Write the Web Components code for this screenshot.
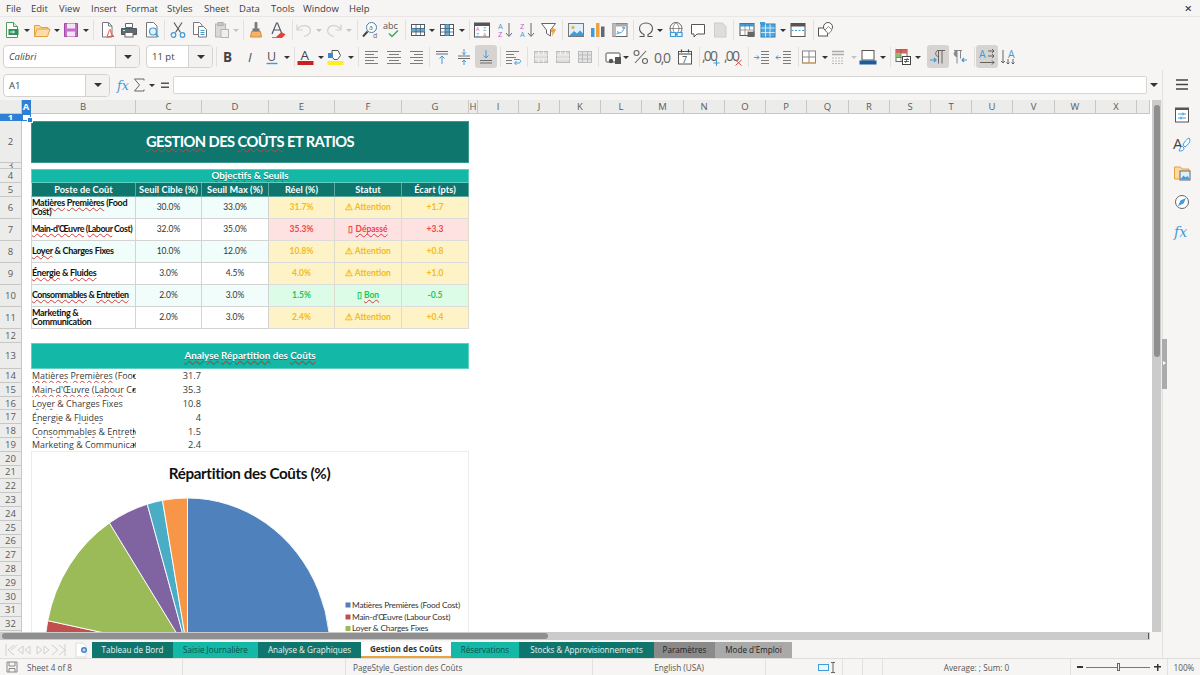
<!DOCTYPE html>
<html><head><meta charset="utf-8"><title>Gestion des Coûts</title>
<style>
html,body{margin:0;padding:0;width:1200px;height:675px;overflow:hidden;background:#f6f5f4}
body{font-family:"Open Sans","Noto Sans",sans-serif}
lo-app{width:1200px;height:675px}
</style></head><body>
<lo-app>
  <menu-bar></menu-bar>
  <tool-bar h="26" start="0" items="new@12 v@27 open@42 v@57 save@71 v@86 |@93 pdf@107 print@129 preview@152 |@164 cut@178 copy@200 paste@222 vg@236 |@243 clone@256 clear@278 |@292 undo@304 vg@319 redo@334 vg@349 |@357 find@370 spell@392 |@405 rows@418 v@432 cols@447 v@462 |@469 azgrid@482 sorta@505 sortz@527 filter@549 |@562 image@576 chart@598 pivot@620 |@633 omega@646 v@660 link@676 comment@698 note@720 |@733 hdr@747 tblx@768 v@783 freeze@798 |@813 shapes@826"></tool-bar>
  <tool-bar h="27" start="213" items="|@216 bold@228 italic@251 under@272 v@287 |@294 fcolor@306 v@321 hilite@336 v@351 |@358 aleft@372 acenter@394 aright@416 |@429 vtop@442 vmid@464 !vbot@486 |@500 wrap@513 |@527 merge@541 merge2@563 merge3@585 |@598 money@614 v@626 pct@641 num@663 date@685 |@699 adddec@712 deldec@734 |@748 indent@762 outdent@784 |@798 border@809 v@825 lstyle@838 vg@854 bcolor@868 v@883 |@890 cond@903 v@918 |@927 !ltr@938 rtl@960 |@974 !txth@987 txtv@1009">
    <combo-box w="137" italic style="margin-left:3px">Calibri</combo-box>
    <combo-box w="67" style="margin-left:6px">11 pt</combo-box>
  </tool-bar>
  <work-area>
    <div slot="main">
      <tool-bar h="30" start="110" items="fx@124 sigma@139 v@152 eq@165">
        <combo-box w="107" style="margin-left:3px">A1</combo-box>
        <formula-input slot="after"></formula-input>
      </tool-bar>
      <sheet-area></sheet-area>
      <sheet-tabs></sheet-tabs>
    </div>
    <side-bar slot="side"></side-bar>
  </work-area>
  <status-bar></status-bar>
</lo-app>
<script>
const G='#6e6e6e',B='#3f9bd9',L='#9a9a9a',O='#e8963a';
const T=(x,y,s,t,c=G,w=400,extra='')=>`<text x="${x}" y="${y}" font-size="${s}" fill="${c}" font-weight="${w}" font-family="Open Sans" ${extra}>${t}</text>`;
const alt=(x1,x2,x3,c=G)=>[3.5,6.5,9.5,12.5,15.5].map((y,i)=>`<path d="M${i%2?x3[0]:x1} ${y}H${i%2?x3[1]:x2}" stroke="${c}" stroke-width=".9"/>`).join('');
const grid=(f,bars='')=>`<rect x="2.500" y="3.500" width="13" height="11" fill="#fff" stroke="${f}"/>${bars}<path d="M2.500 7.500h13M2.500 11h13M7 3.500v11M11.500 3.500v11" stroke="${f}" stroke-width=".8"/>`;
const ICONS={
new:`<path d="M3.500 1.500h7l4 4v11h-11z" fill="#fff" stroke="#4f9d5c"/><path d="M10.500 1.500v4h4" fill="#d7ecd9" stroke="#4f9d5c"/><rect x="5.500" y="8" width="10" height="6" fill="#2f8f58"/><path d="M7 11h4M10 9.500l1.500 1.500-1.500 1.500" stroke="#fff" fill="none"/>`,
open:`<path d="M1.500 15.500v-11h5l1.500 2h7v2" fill="#fbd79c" stroke="#e6a13f"/><path d="M1.500 15.500l2.500-7.500h13l-2.500 7.500z" fill="#fcdca8" stroke="#e6a13f"/>`,
save:`<path d="M2.500 2.500h13v13h-13z" fill="#c56fcb" stroke="#9c4aa4"/><rect x="5" y="2.500" width="8" height="5" fill="#f5e4f6"/><rect x="5" y="10.500" width="8" height="5" fill="#f5e4f6"/>`,
pdf:`<path d="M4.500 1.500h6l3.500 3.500v11h-9.500z" fill="#fff" stroke="#777"/><path d="M10.500 1.500v3.500h3.500" fill="none" stroke="#777"/><path d="M9 15.500c2-4 2-7 3-7s0 5 4 7c-3-1-5 0-7 1" fill="none" stroke="#e0483e"/>`,
print:`<path d="M5.500 2.500h7v4h-7z" fill="#fff" stroke="#666"/><path d="M1.500 7.500h15v6h-15z" fill="#5f6a72" stroke="#4f585f"/><rect x="5" y="11.500" width="8" height="4.500" fill="#fff" stroke="#666"/><rect x="3" y="9" width="2" height="1" fill="#9fd"/>`,
preview:`<path d="M3.500 1.500h7l3.500 3.500v11h-10.500z" fill="#fff" stroke="#777"/><circle cx="10" cy="10.500" r="3.500" fill="#e4f2fb" stroke="${B}" stroke-width="1.200"/><path d="M12.500 13l3 3" stroke="${B}" stroke-width="1.500"/>`,
cut:`<path d="M5 1.500l6.500 10M13 1.500l-6.500 10" stroke="#555" stroke-width="1.100"/><circle cx="4.500" cy="14" r="2.300" fill="none" stroke="${B}" stroke-width="1.200"/><circle cx="13.500" cy="14" r="2.300" fill="none" stroke="${B}" stroke-width="1.200"/>`,
copy:`<path d="M2.500 1.500h6l2.500 2.500v9.500h-8.500z" fill="#fff" stroke="#777"/><path d="M7.500 5.500h5l3 3v7.500h-8z" fill="#fff" stroke="#777"/><path d="M9.500 9.500h4M9.500 11.500h4M9.500 13.500h4" stroke="${B}"/>`,
paste:`<rect x="2.500" y="3" width="10" height="13" fill="#d8d8d8" stroke="#b5b5b5"/><rect x="5" y="1.500" width="5" height="3" fill="#c6c6c6" stroke="#b0b0b0"/><rect x="8" y="8.500" width="7.500" height="8" fill="#eee" stroke="#b5b5b5"/>`,
clone:`<path d="M8 1.500h2v6H8z" fill="#888" stroke="#666" stroke-width=".7"/><path d="M5.500 7.500h7v2.500h-7z" fill="#777"/><path d="M4.500 10.500h9l1 5.500H3.500z" fill="#f5b26b" stroke="#d68a35"/>`,
clear:`<path d="M3 13L7.500 2h1L13 13M5 9h6" fill="none" stroke="#505a66" stroke-width="1.200"/><path d="M7 16l5.500-5 4 2.500-3.500 3.500H8" fill="#e5403a"/><path d="M3 16.500h5" stroke="${B}"/>`,
undo:`<path d="M2.500 8.500C5 4 13 3 15 8c1.500 4-2 6.500-6 7.500" fill="none" stroke="#d0d0d0" stroke-width="1.200"/><path d="M2 3.500v5.500h5.500" fill="none" stroke="#d0d0d0" stroke-width="1.200"/>`,
redo:`<path d="M15.500 8.500C13 4 5 3 3 8c-1.500 4 2 6.500 6 7.500" fill="none" stroke="#d0d0d0" stroke-width="1.200"/><path d="M16 3.500v5.500h-5.500" fill="none" stroke="#d0d0d0" stroke-width="1.200"/>`,
find:`<circle cx="10.500" cy="6.500" r="5" fill="#fff" stroke="#4a7da0"/><path d="M6.500 10.500l-4.500 5" stroke="#444" stroke-width="2"/>${T(8,9,7,'a',G)}${T(12,17,7,'d',G)}`,
spell:T(0,8,9,'abc','#555')+`<path d="M6 12.500l3 3 6-6" fill="none" stroke="#3fa860" stroke-width="1.500"/>`,
rows:grid('#4a5a6a',`<rect x="2.500" y="7.500" width="13" height="3.500" fill="#5db0e6"/>`),
cols:grid('#4a5a6a',`<rect x="7" y="3.500" width="4.500" height="11" fill="#5db0e6"/>`),
azgrid:`<rect x="1.500" y="2" width="15" height="14" fill="#fff" stroke="#555"/><rect x="1.500" y="2" width="15" height="3" fill="#555"/>${T(3,10,5.5,'A','#c25bc9')}${T(10,10,5.5,'Z',B)}${T(3,15.5,5.5,'Z',B)}${T(10,15.5,5.5,'A','#c25bc9')}`,
sorta:T(2,8,7.500,'A',B)+T(2,16,7.500,'Z','#c25bc9')+`<path d="M13 2v13M10 12l3 3.500 3-3.500" fill="none" stroke="#666"/>`,
sortz:T(2,8,7.500,'Z','#c25bc9')+T(2,16,7.500,'A',B)+`<path d="M13 2v13M10 12l3 3.500 3-3.500" fill="none" stroke="#666"/>`,
filter:`<path d="M1.500 2.500h14l-5 6.500v6l-4-2.500v-3.500z" fill="#fff" stroke="#666"/><path d="M12 7l4 1.500-4 7 .5-4-2-.5z" fill="#f2a03d"/>`,
image:`<rect x="1.500" y="2.500" width="15" height="13" fill="#dff0fb" stroke="#777"/><circle cx="6" cy="6.500" r="1.700" fill="#f2b04d"/><path d="M2 15l5-5 3 2.500 3-3 3.500 3.500v2z" fill="#3f9bd9"/>`,
chart:`<rect x="2" y="7" width="3.500" height="9" fill="#3f9bd9"/><rect x="7" y="2" width="3.500" height="14" fill="#f2a03d"/><rect x="12" y="5.500" width="3.500" height="10.500" fill="#5e6a72"/>`,
pivot:`<rect x="2" y="2.500" width="14" height="13" fill="#fff" stroke="#666"/><rect x="2" y="2.500" width="14" height="3" fill="#aaa"/><rect x="2" y="2.500" width="3" height="13" fill="#bbb"/><path d="M7 12c3 0 5-1 6-5M11 7l2-1 1 2M6.500 10l1 2-2 1" fill="none" stroke="${B}"/>`,
omega:`<path d="M2.500 15.500h4.500v-2C4 12 2.500 10 2.500 7.500 2.500 4 5.500 2 9 2s6.500 2 6.500 5.500c0 2.500-1.500 4.500-4.500 6v2h4.500" fill="none" stroke="#555" stroke-width="1.100"/>`,
link:`<circle cx="9" cy="7.500" r="6" fill="#fff" stroke="#666"/><path d="M3 7.500h12M9 1.500c-4 4-4 8 0 12M9 1.500c4 4 4 8 0 12" fill="none" stroke="#666" stroke-width=".7"/><path d="M3.500 11.500h5v4h-5zM10 11.500h5v4h-5z" fill="#eaf5fc" stroke="${B}" stroke-width="1.200"/>`,
comment:`<path d="M2.500 3.500h13v9.500H8l-3 3v-3H2.500z" fill="#fff" stroke="#555"/>`,
note:`<path d="M3.500 2h8l3.500 3.500V16H3.500z" fill="#ddd" stroke="#ccc"/>`,
hdr:`<rect x="2" y="2.500" width="14" height="12" fill="#fff" stroke="#555"/><rect x="2" y="2.500" width="14" height="3" fill="${B}"/><path d="M2.500 9h13M7 3v11.500M11.500 3v11.500" stroke="#777" stroke-width=".7"/><rect x="9.500" y="10.500" width="7" height="5.500" fill="#666"/><rect x="11" y="9" width="4" height="2" fill="#ccc"/>`,
tblx:`<rect x="2" y="3" width="14" height="13" fill="#4da9e0" stroke="#2b80b8"/><path d="M2 7h14M2 11.500h14M6.500 3v13M11 3v13" stroke="#fff" stroke-width=".7"/><rect x="1" y="1" width="5" height="2" fill="${B}"/>`,
freeze:`<rect x="2" y="2.500" width="14" height="13" fill="#fff" stroke="#555"/><rect x="2" y="2.500" width="14" height="3" fill="#555"/><path d="M2.500 9.500h13" stroke="${B}" stroke-dasharray="2 1.500"/>`,
shapes:`<rect x="1.500" y="7" width="9" height="8" fill="#fff" stroke="#555"/><circle cx="11" cy="6" r="4.500" fill="#fff" stroke="#555"/><path d="M8 9l3.500-3.500L15 9l-3.500 4z" fill="#fff" stroke="#888"/>`,
bold:T(4,14,13.5,'B','#444',700),
italic:T(6,14,13.5,'I','#555',400,'font-style="italic"'),
under:T(4,12.500,12.5,'U','#555')+`<path d="M3.500 15.500h11" stroke="${B}" stroke-width="1.400"/>`,
fcolor:T(3.500,11.500,13.500,'A','#444')+`<rect x="0.500" y="13" width="16" height="4" fill="#c9211e"/>`,
hilite:`<path d="M5 2.500h6l2.500 5-3 4H7l-2-3z" fill="#fff" stroke="#555"/><rect x="1" y="5" width="5" height="5" fill="#3f85c9"/><rect x="0.500" y="13" width="16" height="4" fill="#ffef20"/>`,
aleft:alt(2,15,[2,11]),
acenter:alt(2,16,[4,14]),
aright:alt(3,16,[7,16]),
vtop:`<path d="M3 3.500h12M3 6h12" stroke="${G}"/><path d="M9 16V8M6.500 10.500L9 8l2.500 2.500" fill="none" stroke="${B}"/>`,
vmid:`<path d="M3 8h12M3 10.500h12" stroke="${G}"/><path d="M9 1v5.500M7 4.500L9 6.500l2-2M9 17v-5M7 14l2-2 2 2" fill="none" stroke="${B}"/>`,
vbot:`<path d="M3 12.500h12M3 15h12" stroke="${G}"/><path d="M9 2v8M6.500 7.500L9 10l2.500-2.500" fill="none" stroke="${B}"/>`,
wrap:`<path d="M2 3.500h13M2 6.500h8M2 9.500h10M2 12.500h6M2 15.500h6" stroke="${G}" stroke-width=".9"/><path d="M10 11.500h5c2 0 2 3.500 0 3.500h-4M12.500 13l-2 2 2 2" fill="none" stroke="${B}"/>`,
merge:`<rect x="2.500" y="3.500" width="13" height="11" fill="#ddd" stroke="#bbb"/><path d="M2.500 7h13M2.500 11h13M6.500 3.500v3.500M11.500 3.500v3.500M6.500 11v3.500M11.500 11v3.500" stroke="#f2f2f2"/>`,
merge2:`<rect x="2.500" y="3.500" width="13" height="11" fill="#ddd" stroke="#bbb"/><path d="M2.500 7h13M2.500 11h13M6.500 3.500v3.500M11.500 3.500v3.500" stroke="#f2f2f2"/>`,
merge3:`<rect x="2.500" y="3.500" width="13" height="11" fill="#e4e4e4" stroke="#bbb"/><path d="M2.500 7h13M2.500 11h13M6.500 3.500v11M11.500 3.500v11" stroke="#bbb"/>`,
money:`<rect x="1" y="5" width="14" height="9" rx="1" fill="#fff" stroke="#555"/><circle cx="6" cy="13" r="2.200" fill="#555"/><rect x="10" y="9" width="6" height="7" fill="#555"/>`,
pct:`<path d="M3 15L14 3" stroke="#666" stroke-width="1.100"/><circle cx="4.500" cy="5" r="2.500" fill="none" stroke="#666" stroke-width="1.100"/><circle cx="13" cy="13" r="2.500" fill="none" stroke="#666" stroke-width="1.100"/>`,
num:T(0,14.5,14,'0,0','#666',400,'textLength="17"'),
date:`<rect x="2.500" y="3.500" width="13" height="12.500" fill="#fff" stroke="#555"/><path d="M2.500 6h13M5.500 1.500v3M12.500 1.500v3" stroke="#444" stroke-width="1.200"/>${T(6,14.500,9,'7','#444')}`,
adddec:T(-1,13,14,',00','#666',400,'textLength="16"')+`<path d="M13.500 12v6M10.500 15h6" stroke="${B}"/>`,
deldec:T(-1,13,14,',00','#666',400,'textLength="16"')+`<path d="M10.500 12l6 5.500M16.500 12l-6 5.500" stroke="#e0483e"/>`,
indent:`<path d="M8 3.500h8M8 6.500h8M8 9.500h8M8 12.500h8M8 15.500h8" stroke="${G}" stroke-width=".9"/><path d="M1 9.500h5M4 7.500l2 2-2 2" fill="none" stroke="${B}"/>`,
outdent:`<path d="M8 3.500h8M8 6.500h8M8 9.500h8M8 12.500h8M8 15.500h8" stroke="${G}" stroke-width=".9"/><path d="M1 9.500h5M3 7.500l-2 2 2 2" fill="none" stroke="${B}"/>`,
border:`<rect x="2.500" y="3" width="13" height="12" fill="#fff" stroke="#888"/><path d="M9 3v12M2.500 9h13" stroke="#888"/><path d="M2.500 15h13" stroke="#e8963a"/>`,
lstyle:`<path d="M3 3.500h12M3 6.500h12" stroke="#aaa" stroke-width="1.500"/><path d="M3 10h12M3 13h12M3 15.500h12" stroke="#bbb" stroke-dasharray="2 1"/>`,
bcolor:`<rect x="3" y="2.500" width="12" height="9.500" fill="#fff" stroke="#555"/><rect x="0.500" y="12.500" width="17" height="4" fill="#1c5c9c"/>`,
cond:`<rect x="2" y="1.500" width="11" height="12" fill="#fff" stroke="#666"/><rect x="2" y="1.500" width="11" height="4" fill="#d9625b"/><rect x="2" y="5.500" width="5" height="4" fill="#7fbf6f"/><path d="M2 9.500h11M7 1.500v12" stroke="#666" stroke-width=".7"/><rect x="8.500" y="8.500" width="8" height="8" fill="#fff" stroke="#444"/><path d="M10 11.500h5M10 13.500h5M13.500 10l-2 5" stroke="#444" stroke-width=".8"/>`,
ltr:`<path d="M8 2.500h8M9.500 2.500v13M13 2.500v13" stroke="#666" fill="none"/><path d="M9.500 2.500C6 2.500 5.500 8.500 9.500 8.500" fill="none" stroke="#666"/><path d="M1 12h6M5 10l2 2-2 2" stroke="${B}" fill="none" stroke-width="1.200"/>`,
rtl:`<path d="M3 2.500h8M6 2.500v13M9.500 2.500v8" stroke="#888" fill="none"/><path d="M6 2.500C2.500 2.500 2 8.500 6 8.500" fill="#888" stroke="#888"/><path d="M16 12h-5M13 10l-2 2 2 2" stroke="${B}" fill="none" stroke-width="1.200"/>`,
txth:T(1,10,10.500,'A',B)+`<path d="M10 3h6M14 1l2 2-2 2M10 8h6M14 6l2 2-2 2M2 14.500h14M14 12.500l2 2-2 2" fill="none" stroke="#555" stroke-width=".9"/>`,
txtv:T(8,10,10.500,'A',B)+`<path d="M3 2v13M1 13l2 2 2-2M8 11v5M6.500 14.500L8 16l1.500-1.500M13 11v5M11.500 14.500L13 16l1.500-1.500" fill="none" stroke="#555" stroke-width=".9"/>`,
fx:`<text x="2" y="13.500" font-size="12.500" fill="${B}" font-style="italic" font-family="DejaVu Serif">fx</text>`,
sigma:`<path d="M14 4.500V3H4.500L9.500 9l-5 6H14v-1.500" fill="none" stroke="#666"/>`,
eq:`<path d="M5 6.500h8v1.500H5zM5 10.500h8V12H5z" fill="#555"/>`,
};
const ic=(n,s=18)=>`<svg width="${s}" height="${s}" viewBox="0 0 18 18">${ICONS[n]||''}</svg>`;
const base='font-family:"Open Sans","Noto Sans",sans-serif;color:#444;';

class Base extends HTMLElement{render(h){(this.shadowRoot||this.attachShadow({mode:'open'})).innerHTML=h}}

class LoApp extends Base{connectedCallback(){this.render(`<style>:host{display:flex;flex-direction:column;background:#f6f5f4;overflow:hidden}</style><slot></slot>`)}}

class MenuBar extends Base{connectedCallback(){
 const m=[['File',6],['Edit',31],['View',59],['Insert',91],['Format',126],['Styles',167],['Sheet',204],['Data',239],['Tools',271],['Window',303],['Help',349]];
 this.render(`<style>:host{display:flex;align-items:center;height:16px;border-bottom:1px solid #e9e7e5;${base}font-size:9.5px;color:#3d3d3d}
 span{display:block}.x{margin-left:auto;margin-right:8px;font-size:13px;font-weight:600;line-height:13px}</style>`+m.map(([t,x])=>`<span data-x="${x}">${t}</span>`).join('')+`<span class="x">×</span>`);
 const sp=[...this.shadowRoot.querySelectorAll('span[data-x]')];let r=0;
 sp.forEach(s=>{s.style.marginLeft=(+s.dataset.x-r)+'px';r=+s.dataset.x+s.getBoundingClientRect().width;});
}}

class ToolBar extends Base{connectedCallback(){
 const W={v:8,vg:8,'|':1};let prev=+this.getAttribute('start');
 const html=this.getAttribute('items').split(' ').map(it=>{
  let [n,cx]=it.split('@');cx=+cx;const act=n[0]=='!';if(act)n=n.slice(1);
  const w=W[n]||22,ml=cx-w/2-prev;prev=cx+w/2;const st=`margin-left:${ml}px`;
  if(n=='|')return `<i class="sep" style="${st}"></i>`;
  if(n=='v'||n=='vg')return `<i class="${n}" style="${st}"></i>`;
  return `<b class="btn${act?' on':''}" style="${st}">${ic(n)}</b>`;
 }).join('');
 this.render(`<style>:host{display:flex;align-items:center;height:${this.getAttribute('h')}px}
 .btn{display:flex;width:22px;height:23px;align-items:center;justify-content:center;border-radius:3px;font-weight:400}
 .on{background:#d6d3d0}
 .sep{display:block;width:1px;height:20px;background:#e2e0dd}
 .v,.vg{display:block;width:8px;height:8px;position:relative}
 .v::after,.vg::after{content:"";position:absolute;left:1px;top:3px;border:3px solid transparent;border-top:3.5px solid #333;border-bottom:0}
 .vg::after{border-top-color:#c4c4c4}
 svg{display:block;overflow:visible}</style><slot></slot>${html}<slot name="after"></slot>`);
}}

class ComboBox extends Base{connectedCallback(){
 const w=+this.getAttribute('w');
 this.render(`<style>:host{display:flex;width:${w}px;height:23px;box-sizing:border-box;border:1px solid #d4d2cf;border-radius:4px;background:#fff;overflow:hidden;flex:none;${base}font-size:9.5px}
 .t{flex:1;padding-left:5px;line-height:21px;${this.hasAttribute('italic')?'font-style:italic;':''}}
 .b{width:23px;background:#f3f2f0;border-left:1px solid #d4d2cf;display:flex;align-items:center;justify-content:center}
 .b i{border:4px solid transparent;border-top:4.5px solid #333;border-bottom:0;display:block}</style><span class="t"><slot></slot></span><span class="b"><i></i></span>`);
}}

class FormulaInput extends Base{connectedCallback(){
 this.render(`<style>:host{display:flex;align-items:center;margin-left:-3px;flex:none}
 .i{width:972px;height:16px;background:#fff;border:1px solid #d8d6d3;border-radius:2px}
 i{margin-left:3px;border:4px solid transparent;border-top:4.5px solid #333;border-bottom:0;display:block}</style><div class="i"></div><i></i>`);
}}

class WorkArea extends Base{connectedCallback(){
 this.render(`<style>:host{display:flex;height:588px}::slotted([slot=main]){width:1162px;flex:none}</style><slot name="main"></slot><slot name="side"></slot>`);
}}

const u=s=>s.replace(/~([^~]+)~/g,'<u>$1</u>');
class SheetGrid extends Base{connectedCallback(){
 const cols=[22,9,105,66,67,66,67,67,9,41,41,41,41,42,41,41,41,42,41,41,41,41,42,41,41,13];
 const names=' ABCDEFGHIJKLMNOPQRSTUVWX'.split('');
 const rows=[14,7,42,6,14,14,22,22,22,22,22,22,14,26];for(let i=14;i<=33;i++)rows.push(13.8);
 const cell=(c,r,cs,cls,txt)=>`<div class="c ${cls}" style="grid-column:${c}/span ${cs};grid-row:${r}">${txt}</div>`;
 let h='';
 cols.forEach((w,i)=>{ if(i==0)h+=`<div class="hd" style="grid-column:1;grid-row:1"></div>`; else h+=`<div class="hd ${i==1?'sel':''}" style="grid-column:${i+1};grid-row:1">${names[i]||''}</div>`;});
 for(let r=1;r<=33;r++)h+=`<div class="hd rn ${r==1?'sel':''}" style="grid-column:1;grid-row:${r+1}">${r}</div>`;
 h+=`<div class="cur" style="grid-column:2;grid-row:2"></div>`;
 h+=cell(3,3,6,'title','<span>~GESTION~ DES ~COÛTS~ ET RATIOS</span>');
 h+=cell(3,5,6,'sec','<span>~Objectifs~ &amp; ~Seuils~</span>');
 ['~Poste~ de ~Coût~','~Seuil~ ~Cible~ (%)','~Seuil~ Max (%)','~Réel~ (%)','~Statut~','~Écart~ (pts)'].forEach((t,i)=>h+=cell(3+i,6,1,'th'+(i==0?' first':''),`<span>${t}</span>`));
 const A='⚠ Attention',D='▯ ~Dépassé~',N='▯ ~Bon~';
 const data=[
 ['~Matières~ ~Premières~ (Food Cost)','30.0%','33.0%','31.7%',A,'+1.7','y'],
 ['~Main-d\'Œuvre~ (~Labour~ Cost)','32.0%','35.0%','35.3%',D,'+3.3','r','nw'],
 ['~Loyer~ &amp; Charges Fixes','10.0%','12.0%','10.8%',A,'+0.8','y'],
 ['~Énergie~ &amp; ~Fluides~','3.0%','4.5%','4.0%',A,'+1.0','y'],
 ['~Consommables~ &amp; ~Entretien~','2.0%','3.0%','1.5%',N,'-0.5','g','nw'],
 ['Marketing &amp; Communication','2.0%','3.0%','2.4%',A,'+0.4','y']];
 data.forEach((d,k)=>{const r=7+k,z=k%2==0?'z':'';
  h+=cell(3,r,1,'lab first '+z+' '+(d[7]||''),`<span>${u(d[0])}</span>`);
  h+=cell(4,r,1,'num '+z,`<span>${d[1]}</span>`);h+=cell(5,r,1,'num '+z,`<span>${d[2]}</span>`);
  h+=cell(6,r,1,'st '+d[6],`<span>${d[3]}</span>`);h+=cell(7,r,1,'st '+d[6],`<span>${u(d[4])}</span>`);h+=cell(8,r,1,'st '+d[6],`<span>${d[5]}</span>`);
 });
 h+=cell(3,14,6,'sec b2','<span>~Analyse~ ~Répartition~ des ~Coûts~</span>');
 [['~Matières~ ~Premières~ (Food Cost)','31.7',1],['~Main-d\'Œuvre~ (~Labour~ Cost)','35.3',1],['~Loyer~ &amp; Charges Fixes','10.8',0],['~Énergie~ &amp; ~Fluides~','4',0],['~Consommables~ &amp; ~Entretien~','1.5',1],['Marketing &amp; Communication','2.4',1]].forEach((d,k)=>{
  h+=`<div class="plain ${d[2]?'clip':''}" style="grid-column:3;grid-row:${15+k}"><span>${u(d[0])}</span></div>`;
  h+=`<div class="plain val" style="grid-column:4;grid-row:${15+k}">${d[1]}</div>`;
 });
 h=h.replace(/~([^~]+)~/g,'<u>$1</u>');
 this.render(`<style>:host{display:grid;grid-template-columns:${cols.map(x=>x+'px').join(' ')};grid-template-rows:${rows.map(x=>x+'px').join(' ')};background:#fff;overflow:hidden;width:1152px;height:532px;position:relative;font-family:Lato,"Open Sans",sans-serif}
 .hd{box-sizing:border-box;background:#ececeb;border-right:1px solid #c9c7c5;border-bottom:1px solid #c9c7c5;display:flex;align-items:center;justify-content:center;font-family:"Open Sans",sans-serif;font-size:9.5px;color:#5a5a5a;overflow:hidden}
 .sel{background:#2e7fd6;color:#fff;font-weight:700;border-color:#2e7fd6}
 .cur{position:relative;border:1px solid #2e7fd6;box-sizing:border-box;border-right:1.5px solid #2e7fd6;border-bottom:1.5px solid #2e7fd6}
 .cur::after{content:"";position:absolute;right:-3px;bottom:-3px;width:4px;height:4px;background:#2e7fd6;border:.5px solid #fff}
 .c{box-sizing:border-box;display:flex;align-items:center;justify-content:center;text-align:center;overflow:hidden;padding-bottom:1px}
 u{text-decoration:underline wavy #d93a3a;text-decoration-thickness:.8px;text-underline-offset:.5px}
 .title{background:#0f766e;color:#fff;font-weight:700;font-size:14.7px;letter-spacing:-.55px;border:1px solid #3c978f;padding-bottom:2px}
 .sec{background:#14b8a6;color:#fff;font-weight:700;font-size:9.8px;border:1px solid #5fd0c3;text-shadow:0 .5px 0 #0b7a6e;padding-bottom:2px}
 .th{background:#0f766e;color:#fff;font-weight:700;font-size:9.2px;letter-spacing:.08px;border-right:1px solid #5fa8a2;border-bottom:1px solid #5fa8a2;white-space:nowrap}
 .first{border-left:1px solid #d3d3d3}
 .lab{justify-content:flex-start;text-align:left;padding-left:0;padding-right:0;font-weight:700;font-size:9px;letter-spacing:-.3px;line-height:9.5px;color:#111;border-right:1px solid #d3d3d3;border-bottom:1px solid #d3d3d3;background:#fff}
 .lab.z{background:#f0fdfa}
 .nw{white-space:nowrap;letter-spacing:-.45px;font-size:8.9px}
 .num{font-size:8.5px;color:#333;border-right:1px solid #d3d3d3;border-bottom:1px solid #d3d3d3;background:#fff}
 .num.z{background:#f0fdfa}
 .st{font-size:8.5px;font-weight:700;border-right:1px solid #e0dccb;border-bottom:1px solid #dcdcdc;white-space:nowrap}
 .y{background:#fef3c7;color:#f1bb1b}.r{background:#fee2e2;color:#ef4444}.g{background:#dcfce7;color:#22c55e}
 .plain{display:flex;align-items:center;white-space:nowrap;overflow:hidden;position:relative;padding-left:1px;font-family:"Open Sans",sans-serif;font-size:8.9px;color:#3a3a3a}
 .clip::after{content:"";position:absolute;right:1px;top:5px;border:2px solid transparent;border-left:2.5px solid #222;border-right:0}
 .val{justify-content:flex-end;padding-right:1px;padding-left:0;font-size:9.2px}
 cost-chart{grid-column:3/span 6;grid-row:21/span 14}
 </style>${h}<cost-chart></cost-chart>`);
}}

class CostChart extends Base{connectedCallback(){
 const vals=[31.7,35.3,10.8,4,1.5,2.4],cols=['#4f81bd','#c0504d','#9bbb59','#8064a2','#4bacc6','#f79646'];
 const sum=vals.reduce((a,b)=>a+b),cx=155.5,cy=199,rx=142.6,ry=153;
 let a=0,p='';
 vals.forEach((v,i)=>{const b=a+v/sum*2*Math.PI,pt=t=>`${(cx+rx*Math.sin(t)).toFixed(2)} ${(cy-ry*Math.cos(t)).toFixed(2)}`;
  p+=`<path d="M${cx} ${cy}L${pt(a)}A${rx} ${ry} 0 ${b-a>Math.PI?1:0} 1 ${pt(b)}Z" fill="${cols[i]}" stroke="#fff" stroke-width=".9"/>`;a=b;});
 const leg=[['Matières Premières (Food Cost)',cols[0],155],['Main-d\'Œuvre (Labour Cost)',cols[1],167],['Loyer &amp; Charges Fixes',cols[2],178.5]];
 this.render(`<style>:host{display:block;box-sizing:border-box;border:1px solid #ececec;margin-top:-.6px;background:#fff;overflow:hidden}svg{display:block}text{font-family:Lato,sans-serif}</style>
 <svg width="437" height="190" viewBox="0 0 437 190">
 <text x="217.5" y="27" text-anchor="middle" font-size="15.2" font-weight="700" letter-spacing="-.36" fill="#111">Répartition des Coûts (%)</text>
 ${p}
 ${leg.map(l=>`<rect x="313.5" y="${l[2]-4.5}" width="5" height="5" fill="${l[1]}"/><text x="320" y="${l[2]+.5}" font-size="8.3" letter-spacing="-.2" fill="#333">${l[0]}</text>`).join('')}
 </svg>`);
}}

class SheetArea extends Base{connectedCallback(){
 this.render(`<style>:host{display:block;height:540px}
 .top{display:flex;height:532px}
 .v{width:10px;background:#cbcbcb;position:relative;display:flex;flex-direction:column;align-items:center;padding-top:5px;box-sizing:border-box;border-right:1px solid #ededed}
 .v i{display:block;width:6px;height:252px;border-radius:3px;background:#8f8f8f}
 .h{height:8px;background:#cbcbcb;display:flex;align-items:center;padding-left:2px;width:1150px;box-sizing:border-box;position:relative}
 .h i{display:block;width:546px;height:6px;border-radius:3px;background:#8f8f8f}
 .h b{margin-left:auto;margin-right:1px;width:1px;height:6px;background:#555}
 </style><div class="top"><sheet-grid></sheet-grid><div class="v"><i></i></div></div><div class="h"><i></i><b></b></div>`);
}}

class SheetTabs extends Base{connectedCallback(){
 const t=[['Tableau de Bord',81,'#0f766e','#e6f4f2'],['Saisie Journalière',85,'#14b8a6','#0e4f49'],['Analyse &amp; Graphiques',103,'#0f766e','#e6f4f2'],['Gestion des Coûts',90,'#fff','#333','act'],['Réservations',68,'#14b8a6','#0e4f49'],['Stocks &amp; Approvisionnements',135,'#0f766e','#e6f4f2'],['Paramètres',61,'#8a8a8a','#222'],['Mode d\'Emploi',77,'#a9a9a9','#222']];
 this.render(`<style>:host{display:flex;align-items:center;height:18px;padding-top:1px;box-sizing:border-box;${base}font-size:8.1px;background:#f6f5f4}
 .nav{display:flex;align-items:center;width:74px;height:16px;padding-left:5px;box-sizing:border-box}
 .add{width:18px;height:16px;display:flex}
 .tab{height:16px;display:flex;align-items:center;justify-content:center;box-sizing:border-box;white-space:nowrap;flex:none}
 .act{font-weight:700;border-bottom:2px solid #e8a33d}</style>
 <div class="nav"><svg width="62" height="14" viewBox="0 0 62 14" fill="none" stroke="#d0d0d0"><path d="M1 1v12M9 2L3 7l6 5M12 2L6 7M18 3l-5 4 5 4v-8zM25 3l-5 4 5 4zM32 3l5 4-5 4zM39 3l5 4-5 4zM47 2l6 5-6 5M54 2l6 5-6 5M60 1v12"/></svg></div>
 <div class="add"><svg width="18" height="16" viewBox="0 0 18 16"><path d="M2 1h7l3 3v11H2z" fill="#fff" stroke="#ddd"/><circle cx="10" cy="8" r="3" fill="#3f85c9"/><path d="M8.5 8h3M10 6.500v3" stroke="#fff" stroke-width=".9"/></svg></div>
 ${t.map(x=>`<div class="tab ${x[4]||''}" style="width:${x[1]}px;background:${x[2]};color:${x[3]}">${x[0]}</div>`).join('')}`);
}}

class SideBar extends Base{connectedCallback(){
 const i={
 menu:`<path d="M3 4h12M3 8.500h12M3 13h12" stroke="#444" stroke-width="1.500"/>`,
 prop:`<rect x="2.500" y="2" width="13" height="14" fill="#fff" stroke="#555"/><rect x="2.500" y="2" width="13" height="2" fill="#555"/><path d="M5 8h8M5 12h8" stroke="${B}"/><path d="M10 6.500v3M8 10.500v3" stroke="${B}"/>`,
 sty:`<text x="0" y="13" font-size="15" fill="#444" font-family="Open Sans">A</text><path d="M16 2c-2 1-5 4-6 7l2 2c3-2 5-5 5-7zM9 10c-2 1-2 4-3 5 2 0 5 0 5-3z" fill="#fff" stroke="${B}"/>`,
 gal:`<path d="M1.500 15V3h6l1.500 2h7v10z" fill="#fcd9a2" stroke="#e6a13f"/><rect x="7" y="7" width="10" height="9" fill="#dff0fb" stroke="#666"/><path d="M7.500 15.500l3-4 2 2 2-1.500 2.500 3.500z" fill="${B}"/>`,
 nav:`<circle cx="9" cy="9" r="6.500" fill="#fff" stroke="#666"/><path d="M13 5L10.500 10.500 5 13l2.500-5.500z" fill="${B}"/>`,
 fx:`<text x="1" y="15" font-size="14" fill="${B}" font-style="italic" font-family="DejaVu Serif">fx</text>`};
 const ys=['menu','prop','sty','gal','nav','fx'];
 const gaps=[6,12,12,10,11,11];
 this.render(`<style>:host{display:flex;flex-direction:column;align-items:center;width:38px;height:588px;box-sizing:border-box;border-left:1px solid #e4e2df;position:relative;padding-left:1px}
 svg{display:block;flex:none;overflow:visible}
 .h{position:absolute;left:-1px;top:269px;width:5px;height:50px;background:#ababab}
 .h::after{content:"";position:absolute;left:1px;top:22px;border:2.5px solid transparent;border-left:3px solid #fff;border-right:0}
 </style><div class="h"></div>${ys.map((n,k)=>`<svg width="18" height="18" viewBox="0 0 18 18" style="margin-top:${gaps[k]}px">${i[n]}</svg>`).join('')}`);
}}

class StatusBar extends Base{connectedCallback(){
 const cells=[['<svg width="12" height="12" viewBox="0 0 12 12" fill="none" stroke="#888"><path d="M1 1h10v10H1zM3 1v4h6V1M3 11V7.500h6V11"/></svg><span style="margin-left:9px">Sheet 4 of 8</span>',183,'l'],
 ['',163],['PageStyle_Gestion des Coûts',247,'l7'],['English (USA)',173,'c'],
 [`<svg width="18" height="11" viewBox="0 0 18 11" fill="none"><rect x=".5" y="2.500" width="10" height="6" stroke="${B}" fill="#eaf5fc"/><path d="M15 1v9M13 .5h4M13 10.500h4" stroke="#666"/></svg>`,77,'e'],['',20],['',20],
 ['Average: ; Sum: 0',188,'c'],
 ['<b class="m"></b><span class="sl"><i></i></span><b class="p"></b>',97,'z'],['100%',32,'c']];
 this.render(`<style>:host{display:flex;height:17px;border-top:1px solid #e0dedb;box-sizing:border-box;${base}font-size:8.2px;color:#555;background:#f6f5f4}
 .s{box-sizing:border-box;border-right:1px solid #e3e1de;display:flex;align-items:center;white-space:nowrap;flex:none}
 .l{padding-left:6px}.l7{padding-left:7px}.c{justify-content:center}.e{justify-content:flex-end;padding-right:6px}.z{padding-left:6px}
 .m{display:block;width:6px;height:1.5px;background:#333}
 .p{display:block;width:7px;height:7px;margin-left:4px;background:linear-gradient(#333,#333) center/100% 1.5px no-repeat,linear-gradient(#333,#333) center/1.5px 100% no-repeat}
 .sl{display:flex;align-items:center;justify-content:center;width:64px;margin-left:3px;height:1px;background:#777}
 .sl i{display:block;width:3px;height:8px;background:#f6f5f4;border:1px solid #666;box-sizing:border-box}
 </style>${cells.map((c,k)=>`<div class="s ${c[2]||''}" style="width:${c[1]}px;${k==cells.length-1?'border:0;':''}">${c[0]}</div>`).join('')}`);
}}

[['lo-app',LoApp],['menu-bar',MenuBar],['tool-bar',ToolBar],['combo-box',ComboBox],['formula-input',FormulaInput],['work-area',WorkArea],['sheet-grid',SheetGrid],['cost-chart',CostChart],['sheet-area',SheetArea],['sheet-tabs',SheetTabs],['side-bar',SideBar],['status-bar',StatusBar]].forEach(([n,c])=>customElements.define(n,c));
</script>
</body></html>
